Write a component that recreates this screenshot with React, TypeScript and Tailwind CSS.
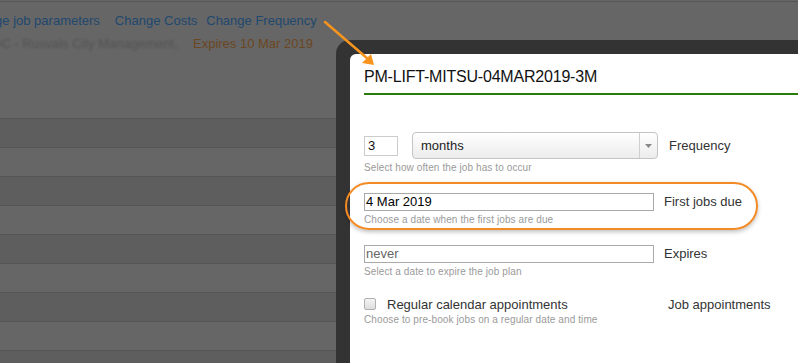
import React from 'react';

const font = { fontFamily: '"Liberation Sans", Arial, sans-serif' };

function Helper({ children }: { children: React.ReactNode }) {
  return (
    <div className="mt-[3px] h-[12px] text-[10px] leading-[12px] tracking-[0.1px] text-[#9a9a9a]">{children}</div>
  );
}

function BackgroundPage() {
  const rows = Array.from({ length: 9 });
  return (
    <div className="w-full">
      <div className="mt-[1px] border-t border-[#575757]" />
      {/* action links */}
      <div className="mt-[11px] flex h-[16px] items-center whitespace-nowrap text-[13px] leading-[16px] text-[#21486f]">
        <span className="ml-[-36px]">Change job parameters</span>
        <span className="ml-[15px]">Change Costs</span>
        <span className="ml-[9px]">Change Frequency</span>
      </div>
      <div className="mt-[7px] flex h-[16px] items-center whitespace-nowrap text-[13px] leading-[16px]">
        <span className="ml-[-8px] w-[201px] shrink-0 overflow-hidden text-[#545454] blur-[1.2px]">
          DC - Rusvals City Management,
        </span>
        <span className="text-[#6b4622]">Expires 10 Mar 2019</span>
      </div>
      {/* table rows */}
      <div className="mt-[66px]">
        {rows.map((_, i) => (
          <div
            key={i}
            className={`h-[29px] border-t border-[#555] ${i % 2 === 0 ? 'bg-[#5e5e5e]' : 'bg-[#666]'}`}
          />
        ))}
      </div>
    </div>
  );
}

function FrequencyDialog() {
  return (
    <div className="absolute left-[336px] top-[40px] right-[-30px] bottom-[-30px] rounded-tl-[14px] bg-[#333] pl-[14px] pt-[14px]">
      <div className="h-full rounded-tl-[6px] bg-white pl-[14px] pt-[14px]">
        <div className="border-b-2 border-[#2a7d0c] pb-[7px] text-[16px] leading-[18px] tracking-[-0.2px] text-[#111]">
          PM-LIFT-MITSU-04MAR2019-3M
        </div>

        <div className="mt-[37px] text-[13px] leading-[16px] text-[#333]">
          {/* Frequency */}
          <div className="flex h-[27px] items-center">
            <div className="flex h-[20px] w-[34px] items-center border border-[#ccc] pl-[3px] text-[#111]">3</div>
            <div className="ml-[14px] flex h-[27px] w-[246px] items-center rounded-[4px] border border-[#c4c4c4] bg-gradient-to-b from-white to-[#ececec]">
              <span className="flex-1 pl-[8px] text-[#222]">months</span>
              <span className="flex h-full w-[18px] items-center justify-center border-l border-[#cfcfcf]">
                <svg width="7" height="4" viewBox="0 0 7 4">
                  <path d="M0 0h7L3.5 4z" fill="#8a8a8a" />
                </svg>
              </span>
            </div>
            <span className="ml-[11px]">Frequency</span>
          </div>
          <Helper>Select how often the job has to occur</Helper>

          {/* First jobs due */}
          <div className="mt-[19px] flex h-[18px] items-center">
            <div className="flex h-[18px] w-[290px] items-center border border-[#a9a9a9] pl-[1px] text-black">4 Mar 2019</div>
            <span className="ml-[10px]">First jobs due</span>
          </div>
          <Helper>Choose a date when the first jobs are due</Helper>

          {/* Expires */}
          <div className="mt-[19px] flex h-[18px] items-center">
            <div className="flex h-[18px] w-[290px] items-center border border-[#aaa] pl-[1px] text-[#666]">never</div>
            <span className="ml-[10px]">Expires</span>
          </div>
          <Helper>Select a date to expire the job plan</Helper>

          {/* Appointments */}
          <div className="mt-[19px] flex h-[16px] items-center">
            <div className="flex w-[304px] items-center">
              <span className="mt-[-3px] h-[12px] w-[12px] rounded-[2px] border border-[#b0b0b0] bg-gradient-to-b from-[#f4f4f4] to-[#dedede]" />
              <span className="ml-[11px]">Regular calendar appointments</span>
            </div>
            <span>Job appointments</span>
          </div>
          <div className="mt-[1px] h-[12px] text-[10px] leading-[12px] tracking-[0.1px] text-[#9a9a9a]">
            Choose to pre-book jobs on a regular date and time
          </div>
        </div>
      </div>
    </div>
  );
}

export default function App() {
  return (
    <div className="relative h-[363px] w-[798px] overflow-hidden bg-[#666]" style={font}>
      <BackgroundPage />
      <FrequencyDialog />

      {/* highlight around first jobs due */}
      <div className="absolute left-[345px] top-[182px] h-[48px] w-[413px] rounded-[24px] border-2 border-[#f48a24] shadow-[0_2px_4px_rgba(0,0,0,0.25)]" />

      {/* pointer arrow */}
      <svg className="absolute left-0 top-0" width="798" height="363" viewBox="0 0 798 363">
        <line x1="325" y1="22" x2="368" y2="59" stroke="#f7941d" strokeWidth="2.5" strokeLinecap="round" />
        <polygon points="374,65 362,63 371,54" fill="#f7941d" />
      </svg>
    </div>
  );
}
